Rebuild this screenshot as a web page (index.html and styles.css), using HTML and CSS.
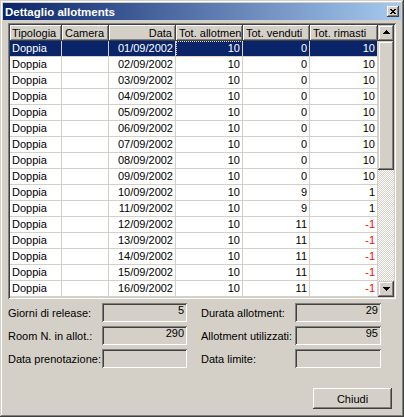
FILE: index.html
```html
<!DOCTYPE html>
<html>
<head>
<meta charset="utf-8">
<link rel="stylesheet" href="styles.css">
</head>
<body>
<div class="window">
  <div class="titlebar">
    <span class="title">Dettaglio allotments</span>
    <span class="close"><svg width="6" height="5" viewBox="0 0 6 5"><path d="M0 0h2v1H0zM4 0h2v1H4zM1 1h4v1H1zM2 2h2v1H2zM1 3h4v1H1zM0 4h2v1H0zM4 4h2v1H4z" fill="#000"/></svg></span>
  </div>
  <div class="client">
    <div class="listview">
      <div class="grid">
        <div class="row head">
          <div class="hcell">Tipologia</div>
          <div class="hcell">Camera</div>
          <div class="hcell r">Data</div>
          <div class="hcell">Tot. allotmen</div>
          <div class="hcell">Tot. venduti</div>
          <div class="hcell">Tot. rimasti</div>
        </div>
        <div class="row sel"><div class="cell">Doppia</div><div class="cell"></div><div class="cell r">01/09/2002</div><div class="cell r focus">10</div><div class="cell r">0</div><div class="cell r">10</div></div>
        <div class="row"><div class="cell">Doppia</div><div class="cell"></div><div class="cell r">02/09/2002</div><div class="cell r">10</div><div class="cell r">0</div><div class="cell r">10</div></div>
        <div class="row"><div class="cell">Doppia</div><div class="cell"></div><div class="cell r">03/09/2002</div><div class="cell r">10</div><div class="cell r">0</div><div class="cell r">10</div></div>
        <div class="row"><div class="cell">Doppia</div><div class="cell"></div><div class="cell r">04/09/2002</div><div class="cell r">10</div><div class="cell r">0</div><div class="cell r">10</div></div>
        <div class="row"><div class="cell">Doppia</div><div class="cell"></div><div class="cell r">05/09/2002</div><div class="cell r">10</div><div class="cell r">0</div><div class="cell r">10</div></div>
        <div class="row"><div class="cell">Doppia</div><div class="cell"></div><div class="cell r">06/09/2002</div><div class="cell r">10</div><div class="cell r">0</div><div class="cell r">10</div></div>
        <div class="row"><div class="cell">Doppia</div><div class="cell"></div><div class="cell r">07/09/2002</div><div class="cell r">10</div><div class="cell r">0</div><div class="cell r">10</div></div>
        <div class="row"><div class="cell">Doppia</div><div class="cell"></div><div class="cell r">08/09/2002</div><div class="cell r">10</div><div class="cell r">0</div><div class="cell r">10</div></div>
        <div class="row"><div class="cell">Doppia</div><div class="cell"></div><div class="cell r">09/09/2002</div><div class="cell r">10</div><div class="cell r">0</div><div class="cell r">10</div></div>
        <div class="row"><div class="cell">Doppia</div><div class="cell"></div><div class="cell r">10/09/2002</div><div class="cell r">10</div><div class="cell r">9</div><div class="cell r">1</div></div>
        <div class="row"><div class="cell">Doppia</div><div class="cell"></div><div class="cell r">11/09/2002</div><div class="cell r">10</div><div class="cell r">9</div><div class="cell r">1</div></div>
        <div class="row"><div class="cell">Doppia</div><div class="cell"></div><div class="cell r">12/09/2002</div><div class="cell r">10</div><div class="cell r">11</div><div class="cell r neg">-1</div></div>
        <div class="row"><div class="cell">Doppia</div><div class="cell"></div><div class="cell r">13/09/2002</div><div class="cell r">10</div><div class="cell r">11</div><div class="cell r neg">-1</div></div>
        <div class="row"><div class="cell">Doppia</div><div class="cell"></div><div class="cell r">14/09/2002</div><div class="cell r">10</div><div class="cell r">11</div><div class="cell r neg">-1</div></div>
        <div class="row"><div class="cell">Doppia</div><div class="cell"></div><div class="cell r">15/09/2002</div><div class="cell r">10</div><div class="cell r">11</div><div class="cell r neg">-1</div></div>
        <div class="row"><div class="cell">Doppia</div><div class="cell"></div><div class="cell r">16/09/2002</div><div class="cell r">10</div><div class="cell r">11</div><div class="cell r neg">-1</div></div>
      </div>
      <div class="vscroll">
        <div class="sbtn up"><svg width="7" height="4" viewBox="0 0 7 4"><path d="M3 0h1v1H3zM2 1h3v1H2zM1 2h5v1H1zM0 3h7v1H0z" fill="#000"/></svg></div>
        <div class="thumb"></div>
        <div class="track"></div>
        <div class="sbtn down"><svg width="7" height="4" viewBox="0 0 7 4"><path d="M0 0h7v1H0zM1 1h5v1H1zM2 2h3v1H2zM3 3h1v1H3z" fill="#000"/></svg></div>
      </div>
    </div>
    <div class="form">
      <div class="col">
        <div class="field"><span class="lbl">Giorni di release:</span><span class="box">5</span></div>
        <div class="field"><span class="lbl">Room N. in allot.:</span><span class="box">290</span></div>
        <div class="field"><span class="lbl">Data prenotazione:</span><span class="box"></span></div>
      </div>
      <div class="col right">
        <div class="field"><span class="lbl">Durata allotment:</span><span class="box">29</span></div>
        <div class="field"><span class="lbl">Allotment utilizzati:</span><span class="box">95</span></div>
        <div class="field"><span class="lbl">Data limite:</span><span class="box"></span></div>
      </div>
    </div>
    <div class="actions"><button class="btn">Chiudi</button></div>
  </div>
</div>
</body>
</html>
```
FILE: styles.css
```css
* { box-sizing: border-box; }
html, body { margin: 0; padding: 0; }
body {
  width: 404px;
  height: 417px;
  overflow: hidden;
  font-family: "Liberation Sans", Arial, sans-serif;
  font-size: 11px;
  color: #000;
  background: #d4d0c8;
}
.window {
  width: 404px;
  height: 417px;
  background: #d4d0c8;
  padding: 3px;
  display: flex;
  flex-direction: column;
  box-shadow: inset -1px -1px #404040, inset 1px 1px #d4d0c8, inset -2px -2px #808080, inset 2px 2px #fff;
}
.titlebar {
  height: 17px;
  flex: none;
  background: linear-gradient(to right, #0a246a, #a6caf0);
  display: flex;
  align-items: center;
  justify-content: space-between;
  padding: 0 2px;
}
.title {
  color: #fff;
  font-weight: bold;
  font-size: 11.5px;
  white-space: nowrap;
}
.close {
  width: 12px;
  height: 11px;
  background: #d4d0c8;
  display: flex;
  align-items: center;
  justify-content: center;
  box-shadow: inset -1px -1px #404040, inset 1px 1px #fff, inset -2px -2px #808080;
}
.close svg, .sbtn svg { display: block; }
.client {
  flex: 1;
  display: flex;
  flex-direction: column;
}
.listview {
  margin: 3px 5px 0 5px;
  height: 276px;
  padding: 2px;
  display: flex;
  background: #fff;
  box-shadow: inset 1px 1px #808080, inset -1px -1px #fff, inset 2px 2px #404040, inset -2px -2px #d4d0c8;
}
.grid {
  width: 368px;
  height: 272px;
  overflow: hidden;
}
.row {
  display: grid;
  grid-template-columns: 52px 47px 67px 67px 67px 68px;
  height: 16px;
}
.hcell {
  background: #d4d0c8;
  line-height: 16px;
  padding: 0 3px;
  white-space: nowrap;
  overflow: hidden;
  box-shadow: inset -1px -1px #404040, inset 1px 1px #fff, inset -2px -2px #808080;
}
.hcell:first-child { padding-left: 2px; }
.cell {
  border-right: 1px solid #d4d0c8;
  border-bottom: 1px solid #d4d0c8;
  line-height: 15px;
  padding: 0 2px;
  white-space: nowrap;
  overflow: hidden;
}
.r { text-align: right; }
.hcell.r { padding-right: 4px; }
.row.sel .cell { background: #0a246a; color: #fff; }
.cell.focus { outline: 1px dotted #f5db95; outline-offset: -1px; }
.neg { color: #f00; }
.vscroll {
  width: 16px;
  display: flex;
  flex-direction: column;
}
.sbtn, .thumb {
  background: #d4d0c8;
  box-shadow: inset -1px -1px #404040, inset 1px 1px #d4d0c8, inset -2px -2px #808080, inset 2px 2px #fff;
}
.sbtn {
  height: 16px;
  flex: none;
  display: flex;
  align-items: center;
  justify-content: center;
}
.sbtn.up svg { margin-top: -2px; }
.thumb { height: 129px; flex: none; }
.track {
  flex: 1;
  background-image: repeating-conic-gradient(#d4d0c8 0 25%, #fff 0 50%);
  background-size: 2px 2px;
}
.form {
  display: flex;
  gap: 14px;
  margin: 4px 0 0 5px;
}
.col {
  display: flex;
  flex-direction: column;
  gap: 4px;
}
.field {
  display: flex;
  align-items: center;
  height: 19px;
}
.lbl {
  width: 94px;
  white-space: nowrap;
}
.box {
  width: 85px;
  height: 19px;
  background: #d4d0c8;
  text-align: right;
  padding: 1px 3px 0 3px;
  line-height: 13px;
  box-shadow: inset 1px 1px #808080, inset -1px -1px #fff, inset 2px 2px #404040, inset -2px -2px #d4d0c8;
}
.col.right .box { width: 86px; }
.actions {
  display: flex;
  justify-content: flex-end;
  margin-top: 20px;
  padding-right: 9px;
}
.btn {
  width: 79px;
  height: 21px;
  border: 0;
  padding: 0;
  font-family: "Liberation Sans", Arial, sans-serif;
  font-size: 11px;
  color: #000;
  background: #d4d0c8;
  box-shadow: inset -1px -1px #404040, inset 1px 1px #fff, inset -2px -2px #808080, inset 2px 2px #d4d0c8;
}
```
